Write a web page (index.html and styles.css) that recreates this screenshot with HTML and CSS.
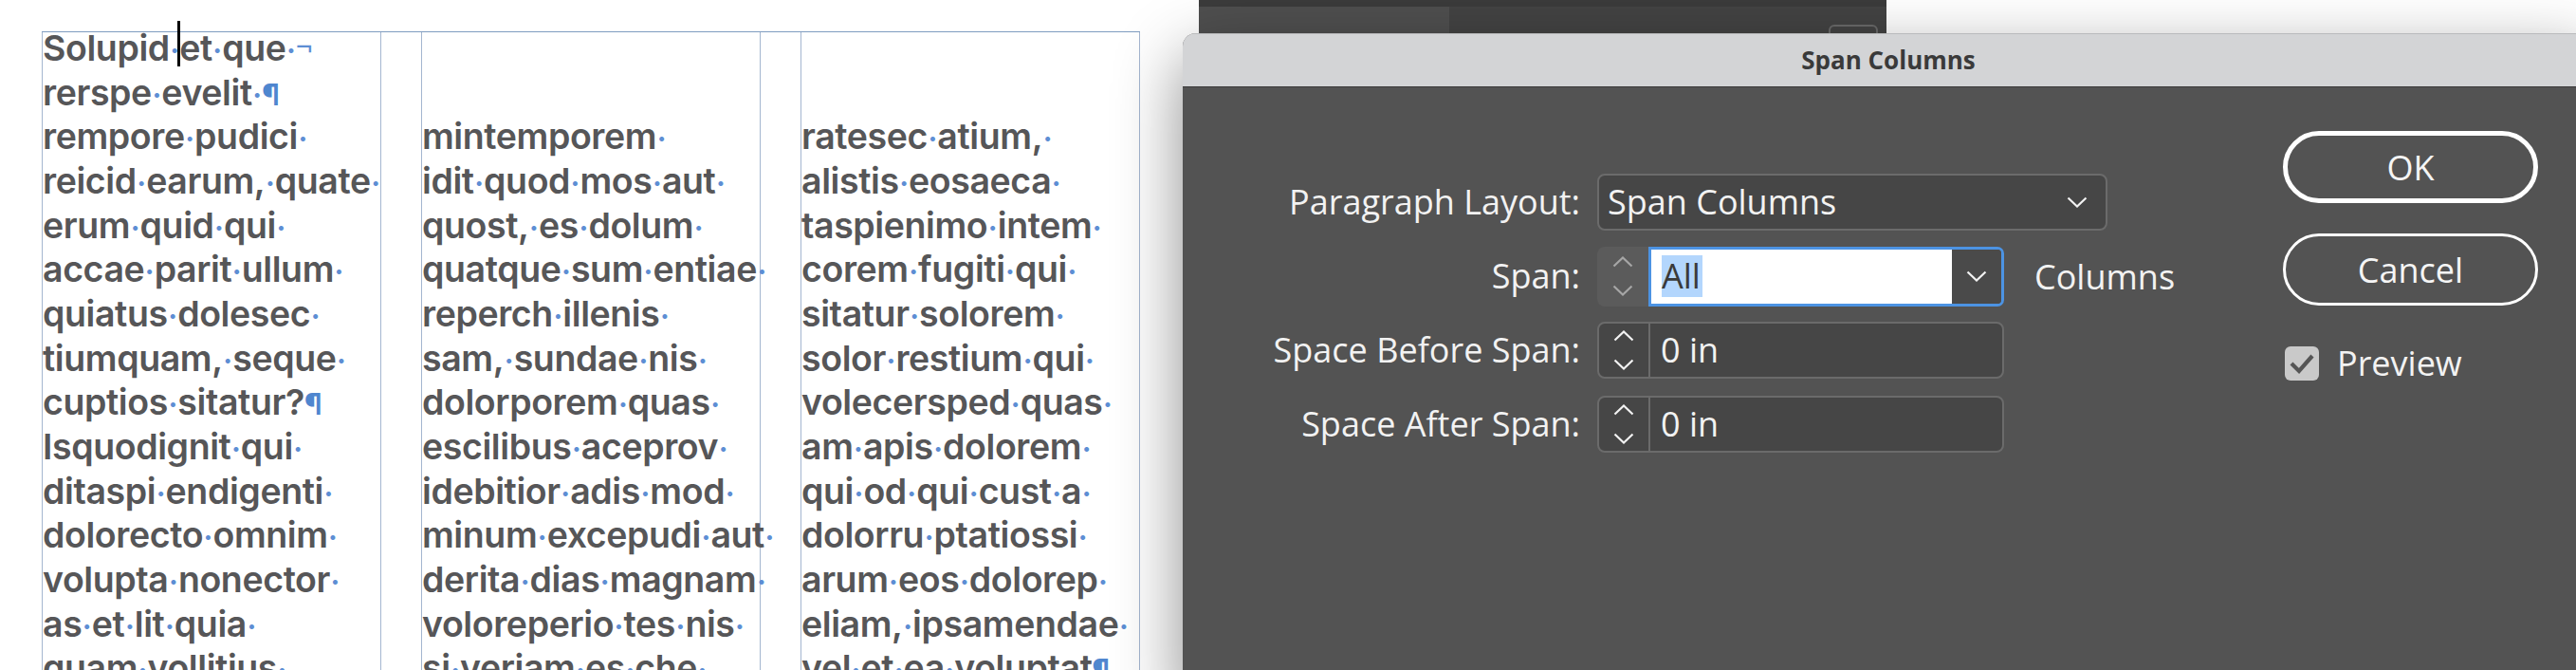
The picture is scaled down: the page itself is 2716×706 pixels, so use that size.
FILE: index.html
```html
<!DOCTYPE html>
<html lang="en">
<head>
<meta charset="utf-8">
<title>Span Columns</title>
<link rel="stylesheet" href="styles.css">
</head>
<body>
<main class="doc">
  <div class="frame">
    <div class="col">
      <div class="txt">
        <div class="ln">Solupid<span class="s">·</span><span class="caret"></span>et<span class="s">·</span>que<span class="s">·</span><span class="nl">¬</span></div>
        <div class="ln">rerspe<span class="s">·</span>evelit<span class="s">·</span><span class="pil">¶</span></div>
        <div class="ln">rempore<span class="s">·</span>pudici<span class="s">·</span></div>
        <div class="ln">reicid<span class="s">·</span>earum,<span class="s">·</span>quate<span class="s">·</span></div>
        <div class="ln">erum<span class="s">·</span>quid<span class="s">·</span>qui<span class="s">·</span></div>
        <div class="ln">accae<span class="s">·</span>parit<span class="s">·</span>ullum<span class="s">·</span></div>
        <div class="ln">quiatus<span class="s">·</span>dolesec<span class="s">·</span></div>
        <div class="ln">tiumquam,<span class="s">·</span>seque<span class="s">·</span></div>
        <div class="ln">cuptios<span class="s">·</span>sitatur?<span class="pil">¶</span></div>
        <div class="ln">Isquodignit<span class="s">·</span>qui<span class="s">·</span></div>
        <div class="ln">ditaspi<span class="s">·</span>endigenti<span class="s">·</span></div>
        <div class="ln">dolorecto<span class="s">·</span>omnim<span class="s">·</span></div>
        <div class="ln">volupta<span class="s">·</span>nonector<span class="s">·</span></div>
        <div class="ln">as<span class="s">·</span>et<span class="s">·</span>lit<span class="s">·</span>quia<span class="s">·</span></div>
        <div class="ln">quam<span class="s">·</span>vollitius<span class="s">·</span></div>
      </div>
    </div>
    <div class="col">
      <div class="txt later">
        <div class="ln">mintemporem<span class="s">·</span></div>
        <div class="ln">idit<span class="s">·</span>quod<span class="s">·</span>mos<span class="s">·</span>aut<span class="s">·</span></div>
        <div class="ln">quost,<span class="s">·</span>es<span class="s">·</span>dolum<span class="s">·</span></div>
        <div class="ln">quatque<span class="s">·</span>sum<span class="s">·</span>entiae<span class="s">·</span></div>
        <div class="ln">reperch<span class="s">·</span>illenis<span class="s">·</span></div>
        <div class="ln">sam,<span class="s">·</span>sundae<span class="s">·</span>nis<span class="s">·</span></div>
        <div class="ln">dolorporem<span class="s">·</span>quas<span class="s">·</span></div>
        <div class="ln">escilibus<span class="s">·</span>aceprov<span class="s">·</span></div>
        <div class="ln">idebitior<span class="s">·</span>adis<span class="s">·</span>mod<span class="s">·</span></div>
        <div class="ln">minum<span class="s">·</span>excepudi<span class="s">·</span>aut<span class="s">·</span></div>
        <div class="ln">derita<span class="s">·</span>dias<span class="s">·</span>magnam<span class="s">·</span></div>
        <div class="ln">voloreperio<span class="s">·</span>tes<span class="s">·</span>nis<span class="s">·</span></div>
        <div class="ln">si<span class="s">·</span>veriam<span class="s">·</span>es<span class="s">·</span>che<span class="s">·</span></div>
      </div>
    </div>
    <div class="col">
      <div class="txt later">
        <div class="ln">ratesec<span class="s">·</span>atium,<span class="s">·</span></div>
        <div class="ln">alistis<span class="s">·</span>eosaeca<span class="s">·</span></div>
        <div class="ln">taspienimo<span class="s">·</span>intem<span class="s">·</span></div>
        <div class="ln">corem<span class="s">·</span>fugiti<span class="s">·</span>qui<span class="s">·</span></div>
        <div class="ln">sitatur<span class="s">·</span>solorem<span class="s">·</span></div>
        <div class="ln">solor<span class="s">·</span>restium<span class="s">·</span>qui<span class="s">·</span></div>
        <div class="ln">volecersped<span class="s">·</span>quas<span class="s">·</span></div>
        <div class="ln">am<span class="s">·</span>apis<span class="s">·</span>dolorem<span class="s">·</span></div>
        <div class="ln">qui<span class="s">·</span>od<span class="s">·</span>qui<span class="s">·</span>cust<span class="s">·</span>a<span class="s">·</span></div>
        <div class="ln">dolorru<span class="s">·</span>ptatiossi<span class="s">·</span></div>
        <div class="ln">arum<span class="s">·</span>eos<span class="s">·</span>dolorep<span class="s">·</span></div>
        <div class="ln">eliam,<span class="s">·</span>ipsamendae<span class="s">·</span></div>
        <div class="ln">vel<span class="s">·</span>et<span class="s">·</span>ea<span class="s">·</span>voluptat<span class="pil">¶</span></div>
      </div>
    </div>
  </div>
</main>

<div class="panel">
  <div class="pstrip"></div>
  <div class="ptabs">
    <div class="ptab"></div>
    <div class="prest"><span class="pbox"></span></div>
  </div>
</div>

<section class="dialog">
  <header class="titlebar">Span Columns</header>
  <div class="dbody">
    <div class="form">
      <div class="lbl">Paragraph Layout:</div>
      <div class="ctl">
        <div class="select">
          <span class="val">Span Columns</span>
          <svg class="chev" width="22" height="12" viewBox="0 0 22 12"><polyline points="1.5,1.5 11,10.5 20.5,1.5" fill="none" stroke="#f2f2f2" stroke-width="2.2"/></svg>
        </div>
      </div>

      <div class="lbl">Span:</div>
      <div class="ctl">
        <div class="spin focus">
          <div class="step dis">
            <svg width="22" height="12" viewBox="0 0 22 12"><polyline points="1.5,10.5 11,1.5 20.5,10.5" fill="none" stroke="#a6a6a6" stroke-width="2.2"/></svg>
            <svg width="22" height="12" viewBox="0 0 22 12"><polyline points="1.5,1.5 11,10.5 20.5,1.5" fill="none" stroke="#a6a6a6" stroke-width="2.2"/></svg>
          </div>
          <div class="ring">
            <div class="field"><span class="sel">All</span></div>
            <div class="drop">
              <svg width="22" height="12" viewBox="0 0 22 12"><polyline points="1.5,1.5 11,10.5 20.5,1.5" fill="none" stroke="#f2f2f2" stroke-width="2.2"/></svg>
            </div>
          </div>
        </div>
        <span class="unit">Columns</span>
      </div>

      <div class="lbl">Space Before Span:</div>
      <div class="ctl">
        <div class="spin">
          <div class="step">
            <svg width="22" height="12" viewBox="0 0 22 12"><polyline points="1.5,10.5 11,1.5 20.5,10.5" fill="none" stroke="#f2f2f2" stroke-width="2.2"/></svg>
            <svg width="22" height="12" viewBox="0 0 22 12"><polyline points="1.5,1.5 11,10.5 20.5,1.5" fill="none" stroke="#f2f2f2" stroke-width="2.2"/></svg>
          </div>
          <div class="num">0 in</div>
        </div>
      </div>

      <div class="lbl">Space After Span:</div>
      <div class="ctl">
        <div class="spin">
          <div class="step">
            <svg width="22" height="12" viewBox="0 0 22 12"><polyline points="1.5,10.5 11,1.5 20.5,10.5" fill="none" stroke="#f2f2f2" stroke-width="2.2"/></svg>
            <svg width="22" height="12" viewBox="0 0 22 12"><polyline points="1.5,1.5 11,10.5 20.5,1.5" fill="none" stroke="#f2f2f2" stroke-width="2.2"/></svg>
          </div>
          <div class="num">0 in</div>
        </div>
      </div>
    </div>

    <div class="actions">
      <button class="btn ok">OK</button>
      <button class="btn">Cancel</button>
      <div class="check">
        <span class="box"><svg width="36" height="36" viewBox="0 0 36 36"><polyline points="7,18 15,26 29,10" fill="none" stroke="#555" stroke-width="4.2"/></svg></span>
        <span class="ctext">Preview</span>
      </div>
    </div>
  </div>
</section>
</body>
</html>
```

FILE: styles.css
```css
html, body {
  margin: 0;
  height: 706px;
  overflow: hidden;
  background: #ffffff;
}
body {
  position: relative;
  font-family: "Open Sans", "Noto Sans", sans-serif;
}

/* ---------- document page ---------- */
.doc {
  padding: 33px 0 0 44px;
}
.frame {
  display: grid;
  grid-template-columns: repeat(3, 358px);
  column-gap: 42px;
  width: 1158px;
  height: 720px;
  border-top: 1px solid #7f9cc0;
}
.col {
  box-sizing: border-box;
  border-left: 1px solid #a4b6d0;
  border-right: 1px solid #a4b6d0;
  height: 100%;
}
.txt {
  margin-top: -6px;
  font-family: Inter, "Open Sans", sans-serif;
  font-weight: 600;
  font-size: 37.5px;
  letter-spacing: -0.4px;
  line-height: 46.67px;
  color: #565658;
  white-space: nowrap;
}
.txt.later {
  margin-top: 87.33px;
}
.ln {
  height: 46.67px;
}
.s {
  color: #5d8ed4;
  font-weight: 400;
  position: relative;
  top: 2px;
}
.pil {
  color: #4f86cf;
  font-size: 31px;
  font-weight: 700;
}
.nl {
  color: #5d8ed4;
  font-weight: 300;
  position: relative;
  top: -3px;
  margin-left: -3px;
}
.caret {
  display: inline-block;
  position: relative;
  width: 0;
  height: 0;
}
.caret::after {
  content: "";
  position: absolute;
  left: -2px;
  top: -42px;
  width: 3px;
  height: 48px;
  background: #000;
}

/* ---------- background panel ---------- */
.panel {
  position: absolute;
  left: 1264px;
  top: 0;
  width: 725px;
  height: 60px;
  background: #3b3b3b;
}
.pstrip {
  height: 7px;
}
.ptabs {
  display: flex;
  height: 53px;
}
.ptab {
  width: 264px;
  background: #4f4f4f;
}
.prest {
  flex: 1;
  background: #434343;
  position: relative;
}
.pbox {
  position: absolute;
  left: 400px;
  top: 19px;
  width: 48px;
  height: 40px;
  border: 2px solid #6a6a6a;
  border-radius: 6px;
}

/* ---------- dialog ---------- */
.dialog {
  position: absolute;
  left: 1247px;
  top: 35px;
  width: 1488px;
  height: 700px;
  border-radius: 14px 14px 0 0;
  overflow: hidden;
  background: #535353;
  box-shadow: 0 25px 70px rgba(0, 0, 0, 0.45);
}
.titlebar {
  box-sizing: border-box;
  height: 57px;
  background: #d3d4d6;
  border-top: 1px solid #b9babc;
  border-bottom: 1px solid #3a3a3a;
  text-align: center;
  font-weight: 700;
  font-size: 26px;
  line-height: 54px;
  color: #3a3a3a;
}
.dbody {
  display: flex;
  align-items: flex-start;
  padding-top: 46px;
  color: #f2f2f2;
  font-size: 36px;
}
.form {
  display: grid;
  grid-template-columns: 400px 613px;
  column-gap: 18px;
  row-gap: 18px;
  align-items: center;
  margin-left: 19px;
  margin-top: 45px;
}
.lbl {
  text-align: right;
  line-height: 60px;
  height: 60px;
  white-space: nowrap;
}
.ctl {
  display: flex;
  align-items: center;
  height: 60px;
}
.select {
  box-sizing: border-box;
  display: flex;
  align-items: center;
  justify-content: space-between;
  width: 538px;
  height: 60px;
  padding: 0 19px 0 9px;
  border: 2px solid #6b6b6b;
  border-radius: 8px;
  background: #464646;
}
.val {
  line-height: 56px;
}
.spin {
  box-sizing: border-box;
  display: flex;
  width: 429px;
  height: 60px;
  border: 2px solid #6b6b6b;
  border-radius: 8px;
  background: #464646;
}
.step {
  box-sizing: border-box;
  width: 54px;
  border-right: 2px solid #6b6b6b;
  display: flex;
  flex-direction: column;
  align-items: center;
  justify-content: center;
  gap: 18px;
}
.num {
  padding-left: 11px;
  line-height: 56px;
}
.spin.focus {
  border: 0;
  height: 63px;
  background: transparent;
}
.step.dis {
  width: 54px;
  border-right: 0;
  background: #5b5b5b;
  border-radius: 8px 0 0 8px;
}
.ring {
  box-sizing: border-box;
  flex: 1;
  display: flex;
  border: 3px solid #4c93e3;
  border-radius: 0 7px 7px 0;
  overflow: hidden;
}
.field {
  flex: 1;
  background: #ffffff;
  padding-left: 11px;
  display: flex;
  align-items: center;
}
.sel {
  background: #b3d6fd;
  color: #3a3a3a;
  line-height: 44px;
  height: 44px;
  padding-right: 2px;
}
.drop {
  width: 52px;
  background: #4a4a4a;
  display: flex;
  align-items: center;
  justify-content: center;
}
.unit {
  margin-left: 32px;
}

/* ---------- actions ---------- */
.actions {
  margin-left: 110px;
  display: flex;
  flex-direction: column;
  width: 269px;
}
.btn {
  box-sizing: border-box;
  width: 269px;
  height: 76px;
  border-radius: 38px;
  background: transparent;
  border: 3px solid #ffffff;
  color: #f5f5f5;
  font-family: "Open Sans", "Noto Sans", sans-serif;
  font-size: 36px;
  padding: 0;
  margin-bottom: 32px;
}
.btn.ok {
  border-width: 5px;
}
.check {
  display: flex;
  align-items: center;
  margin-top: 11px;
  padding-left: 2px;
  height: 36px;
}
.box {
  width: 36px;
  height: 36px;
  border-radius: 6px;
  background: #c9c9c9;
  display: block;
}
.box svg {
  display: block;
}
.ctext {
  margin-left: 19px;
  line-height: 36px;
}
```
